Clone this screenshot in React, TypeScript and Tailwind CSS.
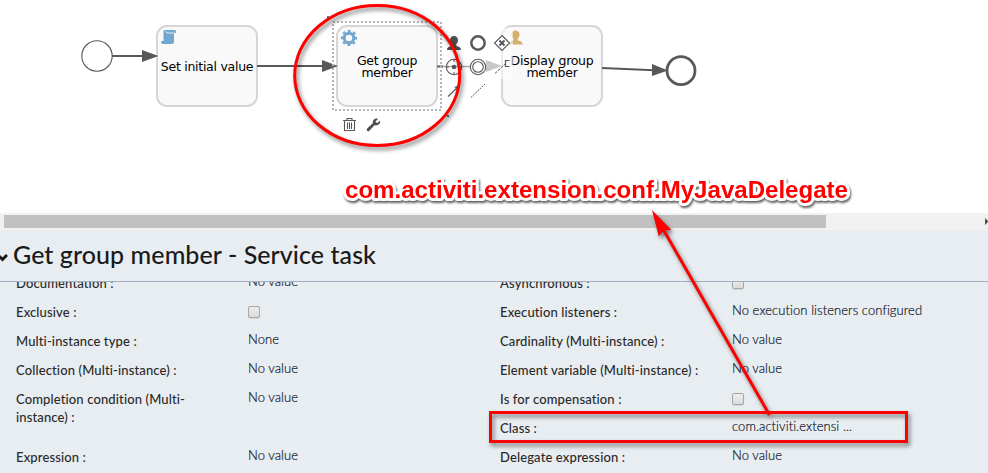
import React from "react";

type Prop = { label: string; value?: string; check?: boolean; tall?: boolean };

const left: Prop[] = [
  { label: "Documentation :", value: "No value" },
  { label: "Exclusive :", check: true },
  { label: "Multi-instance type :", value: "None" },
  { label: "Collection (Multi-instance) :", value: "No value" },
  { label: "Completion condition (Multi-instance) :", value: "No value", tall: true },
  { label: "Expression :", value: "No value" },
];
const right: Prop[] = [
  { label: "Asynchronous :", check: true },
  { label: "Execution listeners :", value: "No execution listeners configured" },
  { label: "Cardinality (Multi-instance) :", value: "No value" },
  { label: "Element variable (Multi-instance) :", value: "No value" },
  { label: "Is for compensation :", check: true },
  { label: "Class :", value: "com.activiti.extensi ..." },
  { label: "Delegate expression :", value: "No value" },
];

function Row({ p }: { p: Prop }) {
  return (
    <div className={p.tall ? "flex h-[58px] pt-[5px]" : "flex h-[29px] pt-[5px]"}>
      <div className="w-[232px] shrink-0 pr-[30px] font-medium leading-[18px] tracking-[0.13px] text-[#2a2a2a]">{p.label}</div>
      {p.check ? (
        <div className="mt-[3px] size-3 rounded-[2px] border border-[#a6a6a6] bg-linear-to-b from-[#eee] to-[#dcdcdc] shadow-[0_1px_1px_#00000018]" />
      ) : (
        <div className="-mt-0.5 whitespace-nowrap font-light leading-[18px] tracking-[0.07px] text-[#0c1428] [-webkit-text-stroke:0.2px_#1c2438]">
          {p.value}
        </div>
      )}
    </div>
  );
}

function Task({ className, lines }: { className: string; lines: string[] }) {
  return (
    <div
      className={
        "absolute top-[25px] flex h-[82px] w-[102px] flex-col items-center justify-center rounded-[11px] border-2 border-[#d6d6d6] bg-[#f9f9f9] pt-[2px] font-['DejaVu_Sans'] text-[12.5px] leading-[12px] tracking-[-0.27px] whitespace-nowrap text-black " +
        className
      }
    >
      {lines.map((l) => (
        <span key={l}>{l}</span>
      ))}
    </div>
  );
}

function User({ x, y, fill }: { x: number; y: number; fill: string }) {
  return (
    <path
      transform={`translate(${x} ${y})`}
      fill={fill}
      stroke="none"
      d="M7 0C9.6 0 11 1.8 11 4.2C11 6.2 10.1 7.3 9.2 8.3V9.6C10 10.6 14 10.7 14 14H0C0 10.7 4 10.6 4.9 9.6V8.3C3.9 7.3 3.1 6.2 3.1 4.2C3.1 1.8 4.4 0 7 0Z"
    />
  );
}

function Diagram() {
  return (
    <svg className="pointer-events-none absolute inset-0" width="988" height="213" fill="none" stroke="#585858">
      <circle cx="97" cy="56" r="15.2" strokeWidth="1.1" fill="#fff" />
      <path d="M112 56H145M257 66H325M437 66.5H443" strokeWidth="2" />
      <path d="M602 68L654 70.3" strokeWidth="2" />
      <path d="M142 50L158.500 56L142 62ZM322 60L338 66L322 72ZM652 64L668 70.500L652 76Z" fill="#585858" stroke="none" />
      <circle cx="681" cy="70.700" r="14" strokeWidth="2.8" fill="#fff" />
      {/* script task marker */}
      <path
        d="M164 30H175.500Q176.300 31 175.800 33H174V42Q173.600 44 171.500 44H162.500Q161 43.500 161 41H163.500V32Q163.500 30.500 164 30Z"
        fill="#72a7d0"
        stroke="none"
      />
      <path d="M165.500 31.200Q166.500 33 168 33H174.500" stroke="#fff" strokeWidth="0.8" />
      {/* service task marker */}
      <circle cx="349" cy="38" r="4.800" stroke="#72a7d0" strokeWidth="3" />
      <circle cx="349" cy="38" r="7" stroke="#72a7d0" strokeWidth="2.200" strokeDasharray="2.9 2.598" strokeDashoffset="1.45" />
      <User x={508.500} y={30.500} fill="#d4b06a" />
      {/* outgoing flow under the context pad */}
      <path d="M443 66.500H490" stroke="#aaa" strokeWidth="1.500" />
      <path d="M486 60L502 66L486 72Z" fill="#c8c8c8" stroke="none" />
      <path d="M501 28H513V79H501Z" fill="#fff" fillOpacity="0.55" stroke="none" />
      {/* selection outline */}
      <rect x="333" y="22" width="108" height="88" stroke="#b5b5b5" strokeWidth="2" strokeDasharray="2 2" />
      <path d="M327 16h2v2h-2zM447 115h2v2h-2zM444 115h2v2h-2z" fill="#4b6fa5" stroke="none" />
      {/* context pad */}
      <User x={447} y={36} fill="#4f4f4f" />
      <circle cx="478" cy="43" r="6.700" strokeWidth="2.500" fill="#fff" />
      <path d="M502 35.500L509.500 43L502 50.500L494.500 43Z" strokeWidth="1.100" fill="#fff" />
      <path d="M499.500 40.500L504.500 45.500M504.500 40.500L499.500 45.500" strokeWidth="2" />
      <circle cx="454" cy="67" r="7.700" strokeWidth="1.100" />
      <circle cx="454" cy="67" r="2.300" fill="#585858" stroke="none" />
      <path d="M454 59V62M454 72V75M446 67H449M459 67H462" strokeWidth="1.100" />
      <circle cx="478" cy="67" r="7.700" strokeWidth="1.100" fill="#fff" />
      <circle cx="478" cy="67" r="5.300" strokeWidth="1.100" />
      <path d="M509.500 60.500H505.500V66.500H509.500" strokeWidth="1.200" />
      <path d="M495 73.500L505 64" strokeWidth="1" strokeDasharray="3 1.200" />
      <path d="M448 96.500L459 86" strokeWidth="1.200" />
      <path d="M454.500 87L460.500 84.500L458 90.500Z" fill="#585858" stroke="none" />
      <path d="M471 97.500L485 84" strokeWidth="1" strokeDasharray="2 1" />
      {/* delete */}
      <path d="M343 120.500H356M347 120V118.500H352V120M344.500 121V130.500H354.500V121M347.500 122.500V129M349.500 122.500V129M351.500 122.500V129" strokeWidth="1.100" />
      {/* wrench */}
      <path
        d="M380 120.500L377.200 123.300L375.500 121.600L378.200 118.700C375.500 117.700 372.300 119.700 372.800 123.300L367.200 128.500C365.700 130 367.700 132.300 369.400 130.700L374.500 125.300C378.500 126 380.800 123.500 380 120.500Z"
        fill="#4f4f4f"
        stroke="none"
      />
    </svg>
  );
}

function Annotations() {
  return (
    <svg className="pointer-events-none absolute inset-0" width="988" height="473" fill="none" stroke="red">
      <g className="drop-shadow-[2px_3px_2px_#00000080]">
        <ellipse cx="377.200" cy="75.500" rx="82.500" ry="70" strokeWidth="3" />
        <rect x="490.500" y="412.500" width="416" height="29" strokeWidth="3" />
        <path d="M663 229L769.500 415" strokeWidth="3" />
        <path d="M652 210L671.500 230L663.500 230.500L658.800 236.500Z" fill="red" stroke="none" />
      </g>
      <g className="drop-shadow-[1px_2px_1px_#000000a0]">
        <text
          x="345"
          y="197.500"
          textLength="503"
          className="font-['Liberation_Sans'] text-[23.5px] font-bold"
          fill="red"
          stroke="#fff"
          strokeWidth="6"
          strokeLinejoin="round"
          paintOrder="stroke"
          lengthAdjust="spacingAndGlyphs"
        >
          com.activiti.extension.conf.MyJavaDelegate
        </text>
      </g>
    </svg>
  );
}

export default function App() {
  return (
    <div className="relative flex h-[473px] w-[988px] flex-col overflow-hidden bg-white font-['Lato',sans-serif] [font-variant-ligatures:none]">
      <div className="relative h-[213px] shrink-0">
        <Task className="left-[156px]" lines={["Set initial value"]} />
        <Task className="left-[336px]" lines={["Get group", "member"]} />
        <Task className="left-[501px]" lines={["Display group", "member"]} />
        <Diagram />
      </div>
      <div className="flex h-[17px] shrink-0 items-center justify-between bg-[#f1f1f1] pl-1">
        <div className="h-[13px] w-[822px] bg-[#c1c1c1]" />
        <svg width="3" height="7" fill="#505050">
          <path d="M0 0L3 3V4L0 7Z" />
        </svg>
      </div>
      <header className="flex h-[52px] shrink-0 items-center border-b border-[#a2adbd] bg-[#e8edf1]">
        <svg className="mt-1 mr-[5px]" width="8" height="8" fill="none" stroke="#1a1a1a" strokeWidth="3">
          <path d="M-2 1L2.500 5.500L7 1" />
        </svg>
        <h1 className="-mt-0.5 text-[25px] leading-none font-medium tracking-[0.07px] text-[#1a1a1a]">Get group member - Service task</h1>
      </header>
      <main className="flex min-h-0 flex-1 overflow-hidden bg-[#e8edf1] pl-4 text-[13px]">
        <div className="-mt-[13px] w-[484px] shrink-0">
          {left.map((p) => (
            <Row key={p.label} p={p} />
          ))}
        </div>
        <div className="-mt-[13px] shrink-0">
          {right.map((p) => (
            <Row key={p.label} p={p} />
          ))}
        </div>
      </main>
      <Annotations />
    </div>
  );
}
